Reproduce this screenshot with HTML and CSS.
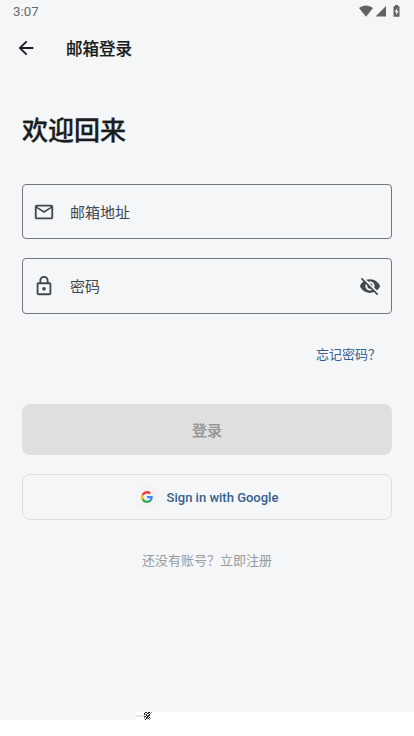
FILE: index.html
```html
<!DOCTYPE html>
<html lang="zh-CN">
<head>
<meta charset="utf-8">
<meta name="viewport" content="width=device-width, initial-scale=1">
<title>邮箱登录</title>
<link rel="stylesheet" href="styles.css">
</head>
<body>
<div class="screen">
  <header class="status">
    <span class="time">3:07</span>
    <svg class="status-icons" width="42" height="14" viewBox="0 0 42 14" fill="#626262">
      <path d="M0 4.100C4.200.5 9.800.5 14 4.100L7 12.800z"/>
      <path d="M16.500 12.400 27 2v10.400z"/>
      <path d="M36 1.100h3v1.200h1.500v10.500h-6V2.300H36z"/>
      <path d="M38.200 3.900 35.700 8h1.500v3.200L39.600 7h-1.500z" fill="#f4f6f8"/>
    </svg>
  </header>
  <nav class="appbar">
    <svg class="back" width="22" height="22" viewBox="0 0 24 24" fill="#191c20"><path d="M20 11H7.830l5.590-5.590L12 4l-8 8 8 8 1.410-1.410L7.830 13H20v-2z"/></svg>
    <h2 class="title">邮箱登录</h2>
  </nav>
  <main class="content">
    <h1 class="welcome">欢迎回来</h1>
    <div class="field email">
      <svg width="22" height="22" viewBox="0 0 24 24" fill="#43474e"><path d="M22 6c0-1.100-.9-2-2-2H4c-1.100 0-2 .9-2 2v12c0 1.100.9 2 2 2h16c1.100 0 2-.9 2-2V6zm-2 0-8 5-8-5h16zm0 12H4V8l8 5 8-5v10z"/></svg>
      <span class="label">邮箱地址</span>
    </div>
    <div class="field">
      <svg width="22" height="22" viewBox="0 0 24 24" fill="#43474e"><path d="M18 8h-1V6c0-2.760-2.240-5-5-5S7 3.240 7 6v2H6c-1.100 0-2 .9-2 2v10c0 1.100.9 2 2 2h12c1.100 0 2-.9 2-2V10c0-1.100-.9-2-2-2zM9 6c0-1.660 1.340-3 3-3s3 1.340 3 3v2H9V6zm9 14H6V10h12v10zm-6-3c1.100 0 2-.9 2-2s-.9-2-2-2-2 .9-2 2 .9 2 2 2z"/></svg>
      <span class="label">密码</span>
      <svg class="eye" width="22" height="22" viewBox="0 0 24 24" fill="#43474e"><path d="M12 7c2.760 0 5 2.240 5 5 0 .65-.13 1.260-.36 1.830l2.920 2.920c1.510-1.260 2.700-2.890 3.430-4.750-1.730-4.390-6-7.500-11-7.500-1.400 0-2.740.25-3.980.7l2.160 2.160C10.740 7.130 11.350 7 12 7zM2 4.270l2.280 2.280.46.46C3.080 8.300 1.780 10.020 1 12c1.730 4.390 6 7.500 11 7.500 1.550 0 3.030-.3 4.380-.84l.42.42L19.730 22 21 20.730 3.270 3 2 4.270zM7.530 9.800l1.550 1.550c-.05.21-.08.43-.08.65 0 1.660 1.340 3 3 3 .22 0 .44-.03.65-.08l1.550 1.550c-.67.33-1.410.53-2.200.53-2.760 0-5-2.240-5-5 0-.79.2-1.530.53-2.200zm4.310-.78 3.150 3.150.02-.16c0-1.660-1.340-3-3-3l-.17.01z"/></svg>
    </div>
    <a class="forgot">忘记密码？</a>
    <div class="login">登录</div>
    <div class="google">
      <span class="badge">
        <svg width="12" height="12" viewBox="0 0 48 48"><path fill="#EA4335" d="M24 9.500c3.540 0 6.710 1.220 9.210 3.600l6.850-6.850C35.900 2.380 30.470 0 24 0 14.620 0 6.510 5.380 2.560 13.220l7.980 6.190C12.430 13.720 17.740 9.500 24 9.500z"/><path fill="#4285F4" d="M46.980 24.550c0-1.570-.15-3.090-.38-4.550H24v9.020h12.940c-.58 2.960-2.260 5.480-4.780 7.180l7.730 6c4.510-4.180 7.090-10.360 7.090-17.650z"/><path fill="#FBBC05" d="M10.530 28.590c-.48-1.450-.76-2.990-.76-4.590s.27-3.140.76-4.590l-7.980-6.190C.92 16.460 0 20.120 0 24s.92 7.540 2.560 10.780l7.970-6.190z"/><path fill="#34A853" d="M24 48c6.480 0 11.930-2.130 15.890-5.810l-7.730-6c-2.150 1.450-4.920 2.300-8.160 2.300-6.260 0-11.570-4.220-13.470-9.910l-7.980 6.190C6.510 42.620 14.620 48 24 48z"/></svg>
      </span>
      <span>Sign in with Google</span>
    </div>
    <p class="register">还没有账号？立即注册</p>
  </main>
</div>
<footer class="bottom">
  <span class="bottom-left"></span>
  <svg width="16" height="8" viewBox="0 0 16 8" shape-rendering="crispEdges">
    <path fill="#e4e6ec" d="M0 3h8v2H0z"/>
    <path fill="#252525" d="M9 0h2v1H9zM12 0h2v1h-2zM8 1h1v2H8zM11 1h2v1h-2zM10 2h1v2h-1zM13 2h1v2h-1zM12 3h1v2h-1zM8 4h2v1H8zM11 4h1v2h-1zM10 5h1v2h-1zM13 5h1v1h-1zM9 7h1v1H9zM12 6h1v1h-1z"/>
    <path fill="#8b8b96" d="M15 0h1v1h-1zM14 1h1v1h-1zM9 2h1v1H9zM11 3h1v1h-1zM8 5h1v2H8zM11 6h1v1h-1zM14 6h1v1h-1zM13 7h1v1h-1z"/>
  </svg>
</footer>
</body>
</html>
```

FILE: styles.css
```css
* { box-sizing: border-box; }
body {
  margin: 0;
  height: 736px;
  overflow: hidden;
  background: #fff;
  color: #191c20;
  font-family: Roboto, "Noto Sans CJK SC", sans-serif;
}
svg { display: block; flex: none; }
.screen { height: 712px; background: #f4f6f8; }
.status {
  height: 24px;
  padding: 0 13px;
  display: flex;
  justify-content: space-between;
}
.time { font-size: 13.300px; line-height: 24px; color: #6a6a6a; }
.status-icons { margin: 4px 0 0; }
.appbar {
  height: 48px;
  padding-left: 15px;
  display: flex;
  align-items: center;
}
.title {
  margin: 0 0 0 29px;
  padding-top: 4px;
  font-size: 16.5px;
  line-height: 24px;
  font-weight: 500;
  -webkit-text-stroke: 0.2px currentColor;
}
.content { padding: 39px 22px 0; display: flex; flex-direction: column; }
.welcome {
  margin: 0 0 33px;
  font-size: 26px;
  line-height: 40px;
  font-weight: 500;
  -webkit-text-stroke: 0.3px currentColor;
}
.field {
  height: 56px;
  margin-bottom: 18px;
  padding: 0 10px;
  border: 1px solid #73777f;
  border-radius: 4px;
  display: flex;
  align-items: center;
  color: #43474e;
}
.email { height: 55px; margin-bottom: 19px; }
.label { margin-left: 15px; padding-top: 2px; font-size: 15px; line-height: 22px; }
.eye { margin-left: auto; }
.forgot { align-self: flex-end; margin: 12px 11px 0 0; font-size: 13px; line-height: 22px; color: #36618e; }
.login {
  height: 51px;
  margin-top: 38px;
  border-radius: 8px;
  background: #dfdfdf;
  color: #949596;
  font-size: 15px;
  font-weight: 500;
  -webkit-text-stroke: 0.2px currentColor;
  display: flex;
  align-items: center;
  justify-content: center;
}
.google {
  height: 46px;
  margin-top: 19px;
  border: 1px solid #dddfe2;
  border-radius: 8px;
  color: #36618e;
  font-size: 13px;
  font-weight: 500;
  display: flex;
  align-items: center;
  justify-content: center;
  gap: 8px;
}
.badge {
  width: 23px;
  height: 23px;
  border-radius: 50%;
  background: #f3f3f4;
  display: flex;
  align-items: center;
  justify-content: center;
}
.register { margin: 30px 0 0; font-size: 13px; line-height: 22px; text-align: center; color: #999b9d; }
.bottom { display: flex; height: 8px; }
.bottom-left { width: 136px; background: #f4f6f8; }
```
